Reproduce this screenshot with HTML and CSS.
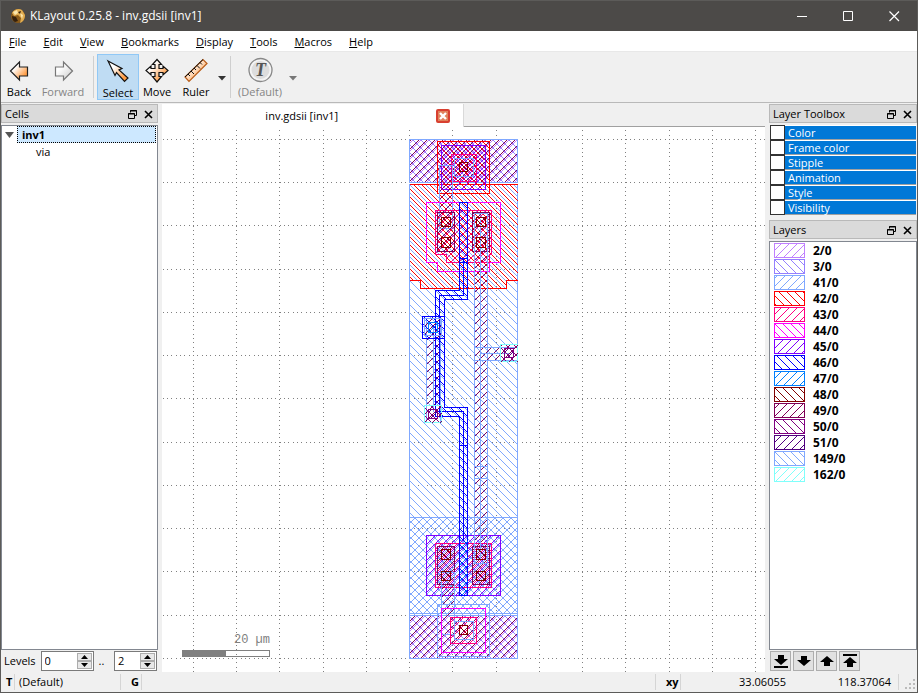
FILE: index.html
```html
<!DOCTYPE html>
<html lang="en">
<head>
<meta charset="utf-8">
<title>KLayout 0.25.8 - inv.gdsii [inv1]</title>
<link rel="stylesheet" href="styles.css">
</head>
<body>
<svg class="defs" aria-hidden="true">
  <defs>
    <path id="fw" d="M0 7h1v1h-1zM1 6h1v1h-1zM2 5h1v1h-1zM3 4h1v1h-1zM4 3h1v1h-1zM5 2h1v1h-1zM6 1h1v1h-1zM7 0h1v1h-1z"/>
    <path id="bw" d="M0 0h1v1h-1zM1 1h1v1h-1zM2 2h1v1h-1zM3 3h1v1h-1zM4 4h1v1h-1zM5 5h1v1h-1zM6 6h1v1h-1zM7 7h1v1h-1z"/>
    <pattern id="p2" x="1" width="8" height="8" patternUnits="userSpaceOnUse"><use href="#fw" fill="#c080ff"/></pattern>
    <pattern id="p3" x="1" width="8" height="8" patternUnits="userSpaceOnUse"><use href="#bw" fill="#9580ff"/></pattern>
    <pattern id="p41" x="5" width="8" height="8" patternUnits="userSpaceOnUse"><use href="#fw" fill="#80a8ff"/></pattern>
    <pattern id="p42" x="5" width="8" height="8" patternUnits="userSpaceOnUse"><use href="#bw" fill="#ff0000"/></pattern>
    <pattern id="p43" x="1" width="8" height="8" patternUnits="userSpaceOnUse"><use href="#fw" fill="#ff0080"/></pattern>
    <pattern id="p44" x="1" width="8" height="8" patternUnits="userSpaceOnUse"><use href="#bw" fill="#ff00ff"/></pattern>
    <pattern id="p45" x="3" width="8" height="8" patternUnits="userSpaceOnUse"><use href="#fw" fill="#8000ff"/></pattern>
    <pattern id="p46" x="3" width="8" height="8" patternUnits="userSpaceOnUse"><use href="#bw" fill="#0000ff"/></pattern>
    <pattern id="p47" x="1" width="8" height="8" patternUnits="userSpaceOnUse"><use href="#fw" fill="#0080ff"/></pattern>
    <pattern id="p48" x="1" width="8" height="8" patternUnits="userSpaceOnUse"><use href="#bw" fill="#800000"/></pattern>
    <pattern id="p49" x="7" width="8" height="8" patternUnits="userSpaceOnUse"><use href="#fw" fill="#800057"/></pattern>
    <pattern id="p50" x="1" width="8" height="8" patternUnits="userSpaceOnUse"><use href="#bw" fill="#800080"/></pattern>
    <pattern id="p51" x="1" width="8" height="8" patternUnits="userSpaceOnUse"><use href="#fw" fill="#500080"/></pattern>
    <pattern id="p149" x="1" width="8" height="8" patternUnits="userSpaceOnUse"><use href="#bw" fill="#80a8ff"/></pattern>
    <pattern id="p162" x="1" width="8" height="8" patternUnits="userSpaceOnUse"><use href="#fw" fill="#80fffb"/></pattern>
    <linearGradient id="or" x1="0" y1="0" x2="1" y2="1"><stop offset=".3" stop-color="#fff"/><stop offset=".8" stop-color="#ff9a40"/></linearGradient>
    <linearGradient id="gr" x1="0" y1="0" x2="1" y2="1"><stop offset=".3" stop-color="#fff"/><stop offset="1" stop-color="#c8c8c8"/></linearGradient>
    <symbol id="float" viewBox="0 0 9 9"><path d="M2.500 2.500V.5h6v5h-2M.5 3.500h6v5h-6zM2 1h7M0 4h7" fill="none" stroke="#000"/></symbol>
    <symbol id="close" viewBox="0 0 9 9"><path d="M1 1l7 7M8 1l-7 7" fill="none" stroke="#000" stroke-width="1.600"/></symbol>
  </defs>
</svg>
<div class="window">
  <header class="titlebar">
    <svg class="logo" viewBox="0 0 16 16"><circle cx="8" cy="8" r="7" fill="#8a5a18"/><path d="M2 5C4 1 9 0 12 2l3 5c0 4-2 7-5 8l1-5-3-3-4 1z" fill="#e0ac50"/><path d="M3 4l4-2 1 3-3 2zM10 5l3 2-1 4z" fill="#fbe6ac"/><path d="M2 8l4 1 2 4-3 1c-2-1-3-3-3-6zM8 4l3-1-1 3z" fill="#34200c"/></svg>
    <h1>KLayout 0.25.8 - inv.gdsii [inv1]</h1>
    <div class="winbtns">
      <button aria-label="Minimize"><svg width="11" height="11"><path d="M0 5.500h10" stroke="#fff"/></svg></button>
      <button aria-label="Maximize"><svg width="11" height="11"><path d="M.5.5h9v9h-9z" fill="none" stroke="#fff"/></svg></button>
      <button aria-label="Close"><svg width="11" height="11"><path d="M.5.5l9.500 9.500M10 .5L.5 10" stroke="#fff" stroke-width="1.200"/></svg></button>
    </div>
  </header>
  <nav class="menubar">
    <button><u>F</u>ile</button><button><u>E</u>dit</button><button><u>V</u>iew</button><button><u>B</u>ookmarks</button><button><u>D</u>isplay</button><button><u>T</u>ools</button><button><u>M</u>acros</button><button><u>H</u>elp</button>
  </nav>
  <div class="toolbar">
    <button class="tool back"><svg viewBox="0 0 26 26"><path d="M4.500 13L13.500 4v5h8v9h-8v4z" fill="url(#or)" stroke="#222" stroke-width="1.200"/></svg>Back</button>
    <button class="tool forward" disabled><svg viewBox="0 0 26 26"><path d="M22.500 13L13.500 4v5h-8v9h8v4z" fill="url(#gr)" stroke="#777" stroke-width="1.200"/></svg>Forward</button>
    <i class="sep"></i>
    <button class="tool active"><svg viewBox="0 0 26 26"><path d="M3 2l14 7.500-3 1.500 9 8-3.500 3.500-8-9-1.500 3z" fill="url(#or)" stroke="#111" stroke-width="1.200"/></svg>Select</button>
    <button class="tool move"><svg viewBox="0 0 26 26"><path d="M13 1.500l4.500 5H15v4h4V8l5 4.500-5 4.500v-2.500h-4v4h2.500L13 24l-4.500-5.500H11v-4H7V17l-5-4.500L7 8v2.500h4v-4H8.500z" fill="url(#or)" stroke="#111" stroke-width="1.200"/></svg>Move</button>
    <button class="tool ruler"><svg viewBox="0 0 26 26"><path d="M2 19L20 1.500l4 4L6 23.500z" fill="url(#or)" stroke="#b85c18" stroke-width="1.200"/><path d="M2 19L20 1.500M5 16l2 2M8 13l3 3M11 10l2 2M14 7.500l3 3M17 4.500l2 2" stroke="#111" fill="none"/></svg>Ruler</button>
    <button class="drop" aria-label="Ruler types"><svg width="8" height="5"><path d="M0 0h8L4 4.500z" fill="#333"/></svg></button>
    <i class="sep second"></i>
    <button class="tool tech" disabled><svg viewBox="0 0 26 26"><circle cx="13.500" cy="12" r="11.500" fill="#f4f4f4" stroke="#888" stroke-width="1.300"/><circle cx="13.500" cy="12" r="9" fill="#ddd"/><text x="13.500" y="18" class="tee">T</text></svg>(Default)</button>
    <button class="drop" aria-label="Technologies"><svg width="8" height="5"><path d="M0 0h8L4 4.500z" fill="#777"/></svg></button>
  </div>
  <main class="work">
    <section class="dock">
      <div class="dockhead"><h2>Cells</h2><button aria-label="Float"><svg><use href="#float"/></svg></button><button aria-label="Close"><svg><use href="#close"/></svg></button></div>
      <ul class="tree">
        <li class="root"><svg width="9" height="6"><path d="M0 0h9L4.500 6z" fill="#555"/></svg><span>inv1</span></li>
        <li class="child">via</li>
      </ul>
      <div class="levels">
        <label for="from">Levels</label>
        <div class="spin wide"><input id="from" value="0"><div><button aria-label="Up"><svg width="7" height="4"><path d="M0 4h7L3.500 0z"/></svg></button><button aria-label="Down"><svg width="7" height="4"><path d="M0 0h7L3.500 4z"/></svg></button></div></div>
        <span class="dots">..</span>
        <div class="spin"><input aria-label="To level" value="2"><div><button aria-label="Up"><svg width="7" height="4"><path d="M0 4h7L3.500 0z"/></svg></button><button aria-label="Down"><svg width="7" height="4"><path d="M0 0h7L3.500 4z"/></svg></button></div></div>
      </div>
    </section>
    <section class="view">
      <div class="tabs"><div class="tab"><span>inv.gdsii [inv1]</span><button aria-label="Close tab"><svg width="14" height="14"><rect x="1" y="1" width="12" height="12" rx="1" fill="#e0825c" stroke="#d84030" stroke-width="2"/><path d="M4 4l6 6M10 4l-6 6" stroke="#fff" stroke-width="2.400"/></svg></button></div></div>
      <div class="canvas">
        <svg class="drawing" shape-rendering="crispEdges">
          <g transform="translate(-162 -127)" fill="none">
            <path class="grid" d="M162.800 139.500H2000M162.800 182.500H2000M162.800 225.500H2000M162.800 269.500H2000M162.800 312.500H2000M162.800 355.500H2000M162.800 398.500H2000M162.800 442.500H2000M162.800 485.500H2000M162.800 528.500H2000M162.800 571.500H2000M162.800 615.500H2000M162.800 658.500H2000M193.500 130.400V2000M236.500 130.400V2000M279.500 130.400V2000M323.500 130.400V2000M366.500 130.400V2000M409.500 130.400V2000M452.500 130.400V2000M496.500 130.400V2000M539.500 130.400V2000M582.500 130.400V2000M625.500 130.400V2000M669.500 130.400V2000M712.500 130.400V2000M755.500 130.400V2000"/>
            <!-- cell body -->
            <path d="M409.500 184.500h108v429h-108z" fill="url(#p149)" stroke="#80a8ff"/>
            <path d="M409.500 517.500h108v98h-108z" fill="url(#p41)" stroke="#80a8ff"/>
            <path d="M409.500 184.500h108v96h-11v8h-86v-8h-11z" fill="url(#p42)"/>
            <path d="M409.500 184.500h108M409.500 280.500h11v8h86v-8h11" stroke="#f00"/>
            <!-- supply rails -->
            <path d="M409.500 139.500h108v43h-108zM409.500 615.500h108v43h-108z" fill="url(#p3)"/>
            <path d="M409.500 139.500h108v43h-108zM409.500 615.500h108v43h-108z" fill="url(#p2)"/>
            <path d="M409.500 139.500h108v43h-108zM409.500 615.500h108v43h-108z" fill="url(#p49)" stroke="#80a8ff"/>
            <!-- well tap -->
            <path d="M437.500 141.500h52v52h-52z" fill="url(#p42)" stroke="#f00"/>
            <path d="M441.500 145.500h44v44h-44z" fill="url(#p45)" stroke="#8000ff"/>
            <path d="M451.500 154.500h25v27h-25z" fill="url(#p43)" stroke="#ff0080"/>
            <path d="M439.500 165.500h13v63h-13z" fill="url(#p49)" stroke="#80a8ff"/>
            <path d="M454.500 158.500h19v18h-19z" fill="url(#p49)" stroke="#80a8ff"/>
            <!-- upper transistor -->
            <path d="M426.500 202.500h74v60h-11v9h-52v-9h-11z" stroke="#f0f"/>
            <path d="M435.500 210.500h56v44h-2v8h-43v-8h-11z" fill="url(#p43)" stroke="#ff0080"/>
            <path d="M437.500 212.500h17v39h-17zM472.500 212.500h17v39h-17z" fill="url(#p49)" stroke="#800057"/>
            <!-- lower transistor -->
            <path d="M426.500 535.500h74v60h-74z" fill="url(#p45)" stroke="#8000ff"/>
            <path d="M435.500 543.500h56v44h-56z" fill="url(#p43)" stroke="#ff0080"/>
            <path d="M437.500 546.500h17v38h-17zM472.500 546.500h17v38h-17z" fill="url(#p49)" stroke="#800057"/>
            <!-- metal -->
            <path d="M474.500 213.500h13v350h-13z" fill="url(#p49)" stroke="#80a8ff"/>
            <path d="M474.500 347.500h43v13h-43z" fill="url(#p49)" stroke="#80a8ff"/>
            <path d="M426.500 318.500h14v104h-14z" fill="url(#p49)" stroke="#80a8ff"/>
            <path d="M480.500 219v340M480.500 353.500h28M433.500 328v84M439.500 318v100M474.500 466.500h13M474.500 478.500h13" stroke="#80a8ff"/>
            <path d="M441.500 572.500h13v62h-13z" fill="url(#p49)" stroke="#80a8ff"/>
            <!-- poly -->
            <path d="M459.500 202.500h8v97h-23v108h23v188h-8v-179h-24v-126h24z" fill="url(#p46)" stroke="#00f"/>
            <path d="M463.500 258v37h-24v116h24v129M459.500 258.500h8M459.500 262.500h8M459.500 445.500h8" stroke="#00f"/>
            <path d="M459.500 540h8v55h-8z" fill="url(#p47)"/>
            <path d="M422.500 316.500h22v22h-22z" fill="url(#p46)" stroke="#00f"/>
            <path d="M424.500 318.500h17v17h-17z" fill="url(#p49)" stroke="#80a8ff"/>
            <path d="M428.500 322.500h9v10h-9z" fill="url(#p47)" stroke="#0080ff"/>
            <!-- pins -->
            <path d="M424.500 405.500h17v17h-17zM500.500 344.500h17v17h-17z" fill="url(#p50)" stroke="#80fffb"/>
            <path d="M424.500 405.500h17v17h-17zM500.500 344.500h17v17h-17z" fill="url(#p49)"/>
            <path d="M428.500 409.500h9v9h-9zM504.500 348.500h9v9h-9z" fill="url(#p51)" stroke="#800080"/>
            <!-- substrate tap -->
            <path d="M437.500 604.500h52v52h-52z" stroke="#80a8ff"/>
            <path d="M441.500 608.500h44v44h-44z" stroke="#f0f"/>
            <path d="M450.500 617.500h26v26h-26z" fill="url(#p43)" stroke="#ff0080"/>
            <path d="M454.500 621.500h19v18h-19z" stroke="#80a8ff"/>
            <!-- contacts -->
            <g fill="url(#p48)" stroke="#800000">
              <path d="M459.500 162.500h8v9h-8zM459.500 625.500h8v9h-8z"/>
              <path d="M441.500 217.500h9v9h-9zM441.500 237.500h9v10h-9zM476.500 217.500h9v9h-9zM476.500 237.500h9v10h-9z"/>
              <path d="M441.500 549.500h9v10h-9zM441.500 571.500h9v9h-9zM476.500 549.500h9v10h-9zM476.500 571.500h9v9h-9z"/>
            </g>
          </g>
        </svg>
        <div class="scale"><span>20 µm</span><div class="bar"></div></div>
      </div>
    </section>
    <section class="dock right">
      <div class="dockhead"><h2>Layer Toolbox</h2><button aria-label="Float"><svg><use href="#float"/></svg></button><button aria-label="Close"><svg><use href="#close"/></svg></button></div>
      <div class="toolbox"><button>Color</button><button>Frame color</button><button>Stipple</button><button>Animation</button><button>Style</button><button>Visibility</button></div>
      <div class="dockhead"><h2>Layers</h2><button aria-label="Float"><svg><use href="#float"/></svg></button><button aria-label="Close"><svg><use href="#close"/></svg></button></div>
      <ul class="layers">
        <li><svg><rect fill="url(#p2)" stroke="#c080ff"/></svg>2/0</li>
        <li><svg><rect fill="url(#p3)" stroke="#9580ff"/></svg>3/0</li>
        <li><svg><rect fill="url(#p41)" stroke="#80a8ff"/></svg>41/0</li>
        <li><svg><rect fill="url(#p42)" stroke="#ff0000"/></svg>42/0</li>
        <li><svg><rect fill="url(#p43)" stroke="#ff0080"/></svg>43/0</li>
        <li><svg><rect fill="url(#p44)" stroke="#ff00ff"/></svg>44/0</li>
        <li><svg><rect fill="url(#p45)" stroke="#8000ff"/></svg>45/0</li>
        <li><svg><rect fill="url(#p46)" stroke="#0000ff"/></svg>46/0</li>
        <li><svg><rect fill="url(#p47)" stroke="#0080ff"/></svg>47/0</li>
        <li><svg><rect fill="url(#p48)" stroke="#800000"/></svg>48/0</li>
        <li><svg><rect fill="url(#p49)" stroke="#800057"/></svg>49/0</li>
        <li><svg><rect fill="url(#p50)" stroke="#800080"/></svg>50/0</li>
        <li><svg><rect fill="url(#p51)" stroke="#500080"/></svg>51/0</li>
        <li><svg><rect fill="url(#p149)" stroke="#80a8ff"/></svg>149/0</li>
        <li><svg><rect fill="url(#p162)" stroke="#80fffb"/></svg>162/0</li>
      </ul>
      <div class="order">
        <button aria-label="Move to bottom"><svg viewBox="0 0 14 14"><path d="M4 1h6v4h4l-7 6-7-6h4zM0 12h14v2H0z"/></svg></button>
        <button aria-label="Move down"><svg viewBox="0 0 14 14"><path d="M4 2h6v4h4l-7 6-7-6h4z"/></svg></button>
        <button aria-label="Move up"><svg viewBox="0 0 14 14"><path d="M4 12h6V8h4L7 2 0 8h4z"/></svg></button>
        <button aria-label="Move to top"><svg viewBox="0 0 14 14"><path d="M4 13h6V9h4L7 3 0 9h4zM0 0h14v2H0z"/></svg></button>
      </div>
    </section>
  </main>
  <footer class="status">
    <b class="t">T</b><span class="tech-name">(Default)</span><b class="g">G</b><span class="msg"></span><b class="xy">xy</b><span class="coord">33.06055</span><span class="coord last">118.37064</span>
    <svg class="grip" width="11" height="11" fill="#bbb"><path d="M8 0h2v2H8zM4 4h2v2H4zM8 4h2v2H8zM0 8h2v2H0zM4 8h2v2H4zM8 8h2v2H8z"/></svg>
  </footer>
</div>
</body>
</html>
```
FILE: styles.css
```css
* { box-sizing: border-box; }
body { margin: 0; font: 11px/16px "Open Sans", "Noto Sans", sans-serif; color: #000; }
button { font: inherit; color: inherit; background: none; border: 0; padding: 0; margin: 0; }
h1, h2, ul { margin: 0; padding: 0; font: inherit; list-style: none; }
.defs { position: absolute; width: 0; height: 0; }
.window { display: flex; flex-direction: column; height: 100vh; background: #f0f0f0; border: 1px solid #5c5b59; }
.titlebar { display: flex; align-items: center; height: 30px; background: #4c4a48; color: #fff; padding-left: 9px; flex: none; font-size: 12px; }
.logo { width: 16px; height: 16px; margin-right: 4px; }
.winbtns { display: flex; margin-left: auto; }
.winbtns button { width: 46px; height: 28px; display: flex; align-items: center; justify-content: center; }
.menubar { display: flex; gap: 17px; height: 21px; padding: 2px 0 0 8px; background: #fff; border-bottom: 1px solid #e8e8e8; flex: none; align-items: center; }
.toolbar { display: flex; height: 51px; padding-top: 2px; border-bottom: 1px solid #b9b9b9; flex: none; }
.tool { display: flex; flex-direction: column; align-items: center; width: 36px; height: 46px; padding-top: 3px; border: 1px solid transparent; }
.tool svg { width: 26px; height: 26px; flex: none; overflow: visible; }
.tool:disabled { color: #858585; }
.forward { width: 52px; }
.active { width: 42px; padding-top: 4px; background: #bfdcf3; border-color: #90c8f6; }
.ruler { margin-left: 2px; width: 38px; }
.tech { width: 52px; }
.tee { font: italic bold 18px "Liberation Serif", serif; text-anchor: middle; fill: #555; }
.sep { width: 1px; height: 42px; margin: 2px 3px 0 4px; background: #cfcfcf; }
.second { margin-left: 2px; }
.drop { width: 13px; height: 46px; }
.work { display: grid; grid-template-columns: 157px minmax(0, 1fr) 148px; column-gap: 4px; flex: 1; min-height: 0; padding-top: 1px; }
.dock { display: flex; flex-direction: column; min-height: 0; }
.dockhead { display: flex; align-items: center; height: 19px; padding: 1px 4px 0 3px; background: #dadada; border: 1px solid #b9b9b9; margin-bottom: 2px; flex: none; }
.dockhead h2 { flex: 1; }
.dockhead button { margin-left: 7px; height: 9px; }
.dockhead svg { display: block; width: 9px; height: 9px; }
.tree, .layers { flex: 1; min-height: 0; overflow: hidden; background: #fff; border: 1px solid #828790; }
.root { display: flex; align-items: center; height: 17px; font-weight: bold; }
.root svg { margin: 0 3px; }
.root span { flex: 1; height: 17px; padding-left: 4px; margin-right: 1px; background: #cde8ff; border: 1px dotted #000; line-height: 15px; }
.child { padding-left: 34px; line-height: 18px; }
.levels { display: flex; align-items: center; gap: 5px; height: 22px; padding-left: 3px; flex: none; }
.spin { display: flex; width: 43px; height: 20px; margin: 0 1px 0 auto; padding: 1px; background: #fff; border: 1px solid #7a7a7a; }
.wide { width: 53px; margin: 0; }
.spin input { flex: 1; width: 0; border: 0; padding: 0 2px; font: inherit; }
.spin div { width: 15px; display: flex; flex-direction: column; }
.spin button { flex: 1; display: flex; align-items: center; justify-content: center; background: #e8e8e8; border: 1px solid #adadad; }
.view { display: flex; flex-direction: column; min-width: 0; }
.tabs { height: 23px; background: linear-gradient(#a0a0a0, #a0a0a0) bottom / 100% 1px no-repeat; flex: none; }
.tab { display: flex; align-items: center; width: 50%; height: 23px; background: #fff; border-right: 1px solid #d9d9d9; }
.tab span { flex: 1; text-align: center; padding-left: 6px; }
.tab button { height: 14px; margin-right: 13px; }
.tab svg { display: block; }
.canvas { flex: 1; min-height: 0; position: relative; background: #fff; overflow: hidden; }
.drawing { display: block; width: 100%; height: 100%; }
.grid { stroke: #808080; stroke-dasharray: 1 3.325; }
.scale { position: absolute; left: 20px; bottom: 15px; width: 88px; color: #808080; font: 12px/16px "Liberation Mono", monospace; text-align: right; }
.bar { height: 7px; margin-top: 2px; border: 1px solid #808080; background: linear-gradient(#808080, #808080) left / 50% 100% no-repeat; }
.toolbox { display: grid; grid-auto-rows: 15px; padding: 0 1px; margin-bottom: 5px; }
.toolbox button { display: flex; align-items: center; background: #0078d7; color: #fff; border-bottom: 1px solid #a0a0a0; border-top: 1px solid #fff; line-height: 13px; }
.toolbox button::before { content: ""; width: 13px; height: 13px; margin-right: 4px; background: #fff; border: 1px solid #333; }
.toolbox button::before { margin-right: 3px; }
.layers { padding: 1px 4px; font-size: 12px; }
.layers li { display: flex; align-items: flex-start; gap: 8px; height: 16px; font-weight: bold; }
.layers svg { width: 31px; height: 15px; shape-rendering: crispEdges; }
.layers rect { x: 1.5px; y: 0.5px; width: 30px; height: 14px; transform: translateX(-1px); }
.order { display: flex; gap: 2px; height: 22px; padding: 1px 1px; flex: none; }
.order button { width: 21px; height: 20px; background: #e1e1e1; border: 1px solid #adadad; display: flex; align-items: center; justify-content: center; }
.order svg { width: 14px; height: 14px; }
.status { display: flex; align-items: center; height: 20px; padding-left: 5px; flex: none; }
.status > b, .status > span { border-right: 1px solid #d5d5d5; height: 16px; }
.status .t { width: 9px; }
.tech-name { width: 106px; padding-left: 4px; }
.g { width: 21px; padding-left: 10px; }
.msg { flex: 1; }
.xy { width: 25px; padding-left: 10px; }
.status .coord { width: 105px; text-align: right; border: 0; }
.status .last { width: 113px; padding-right: 7px; border-right: 1px solid #d5d5d5; }
.grip { margin: 4px 1px 0 6px; }
```
